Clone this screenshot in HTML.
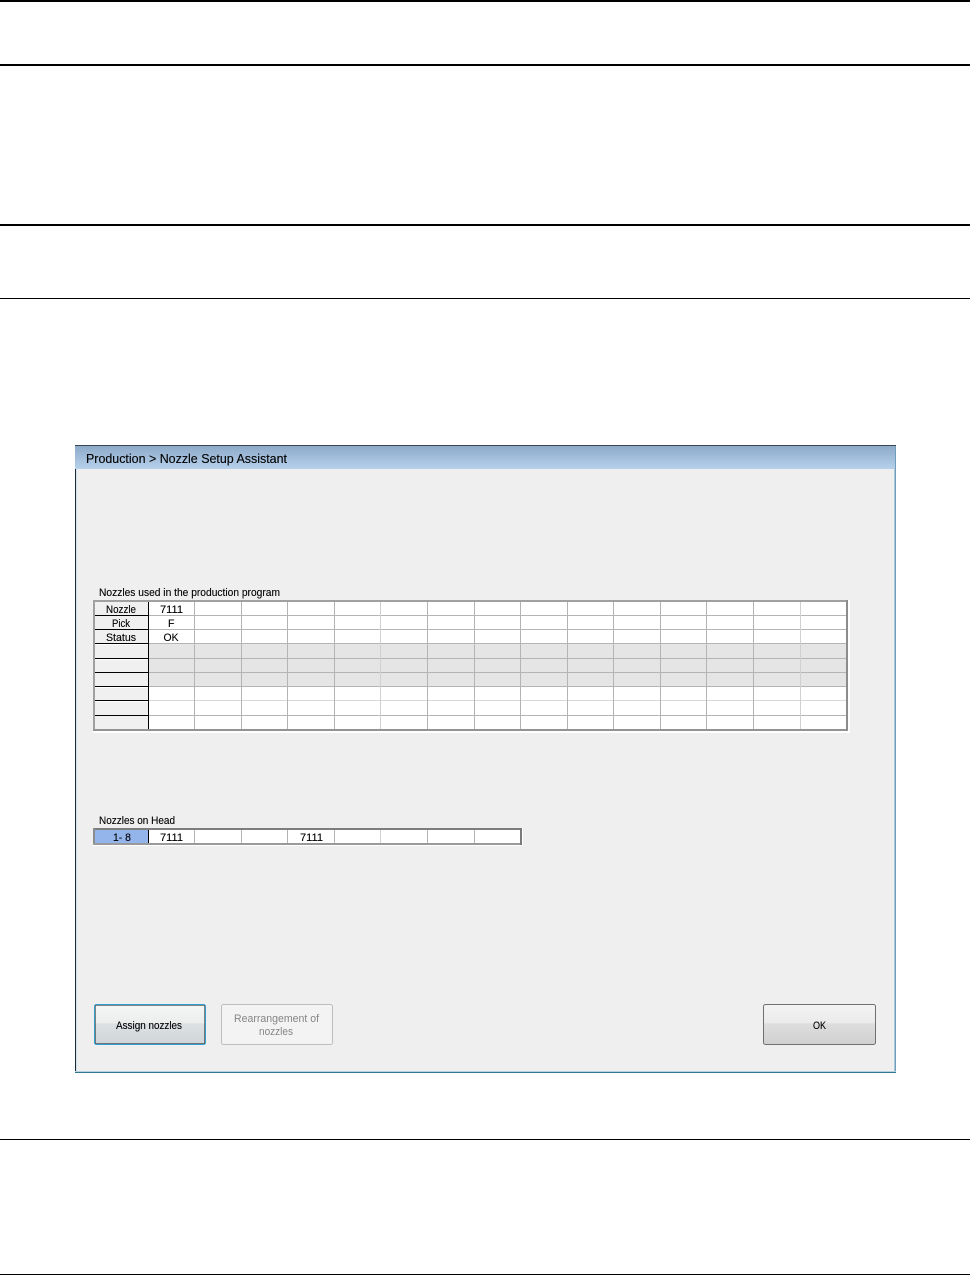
<!DOCTYPE html>
<html><head><meta charset="utf-8"><style>
html,body{margin:0;padding:0;background:#fff;width:970px;height:1275px;overflow:hidden}
svg{display:block}
text{font-family:"Liberation Sans",sans-serif;font-size:10.6px;fill:#000;stroke:#000;stroke-width:.12px}
text.d{fill:#858585;stroke:none}
</style></head><body>
<svg width="970" height="1275" viewBox="0 0 970 1275" xmlns="http://www.w3.org/2000/svg">
<defs>
<linearGradient id="tb" x1="0" y1="0" x2="0" y2="1"><stop offset="0" stop-color="#8daac9"/><stop offset="1" stop-color="#b7d1ec"/></linearGradient>
<linearGradient id="b1" x1="0" y1="0" x2="0" y2="1"><stop offset="0" stop-color="#f5f6f6"/><stop offset=".46" stop-color="#eceeee"/><stop offset=".48" stop-color="#dde1e3"/><stop offset="1" stop-color="#cfd5d8"/></linearGradient>
<linearGradient id="b2" x1="0" y1="0" x2="0" y2="1"><stop offset="0" stop-color="#f3f3f3"/><stop offset=".46" stop-color="#ebebeb"/><stop offset=".48" stop-color="#dedede"/><stop offset="1" stop-color="#d0d0d0"/></linearGradient>
</defs>
<g shape-rendering="crispEdges">
<rect x="0" y="0" width="970" height="2" fill="#000"/>
<rect x="0" y="64" width="970" height="2" fill="#000"/>
<rect x="0" y="224" width="970" height="2" fill="#000"/>
<rect x="0" y="298" width="970" height="1" fill="#000"/>
<rect x="0" y="1139" width="970" height="1" fill="#000"/>
<rect x="0" y="1274" width="970" height="1" fill="#000"/>

<!-- window -->
<rect x="75" y="445" width="821" height="628" fill="#efefef"/>
<rect x="75" y="445" width="821" height="1" fill="#3b4650"/>
<rect x="75" y="446" width="821" height="23" fill="url(#tb)"/>
<rect x="75" y="469" width="1" height="604" fill="#1c2c36"/>
<rect x="76" y="469" width="1" height="603" fill="#cfe0ea"/>
<rect x="894" y="469" width="1" height="603" fill="#a9c6da"/>
<rect x="895" y="446" width="1" height="627" fill="#6f9ebd"/>
<rect x="75" y="1071" width="821" height="1" fill="#b5d0df"/>
<rect x="75" y="1072" width="821" height="1" fill="#2f7690"/>

<!-- table 1 -->
<rect x="93" y="600" width="757" height="133" fill="#fff"/>
<rect x="95" y="602" width="53" height="128" fill="#f0f0f0"/>
<rect x="149" y="602" width="697" height="41" fill="#fff"/>
<rect x="149" y="644" width="697" height="42" fill="#e5e5e5"/>
<rect x="149" y="687" width="697" height="42" fill="#fff"/>
<g fill="#b4b4b4">
<rect x="149" y="615" width="698" height="1"/><rect x="149" y="629" width="698" height="1"/>
<rect x="149" y="643" width="698" height="1"/><rect x="149" y="658" width="698" height="1"/>
<rect x="149" y="672" width="698" height="1"/><rect x="149" y="686" width="698" height="1"/>
<rect x="149" y="700" width="698" height="1" fill="#d8d8d8"/><rect x="149" y="715" width="698" height="1"/>
<rect x="194" y="601" width="1" height="129"/><rect x="241" y="601" width="1" height="129"/>
<rect x="287" y="601" width="1" height="129"/><rect x="334" y="601" width="1" height="129"/>
<rect x="380" y="601" width="1" height="129" fill="#d0d0d0"/><rect x="427" y="601" width="1" height="129"/>
<rect x="474" y="601" width="1" height="129"/><rect x="520" y="601" width="1" height="129"/>
<rect x="567" y="601" width="1" height="129"/><rect x="613" y="601" width="1" height="129"/>
<rect x="660" y="601" width="1" height="129"/><rect x="706" y="601" width="1" height="129"/>
<rect x="753" y="601" width="1" height="129"/><rect x="800" y="601" width="1" height="129" fill="#d0d0d0"/>
</g>
<g fill="#000">
<rect x="95" y="615" width="54" height="1"/><rect x="95" y="629" width="54" height="1"/>
<rect x="95" y="643" width="54" height="1"/><rect x="95" y="658" width="54" height="1"/>
<rect x="95" y="672" width="54" height="1"/><rect x="95" y="686" width="54" height="1"/>
<rect x="95" y="700" width="54" height="1"/><rect x="95" y="715" width="54" height="1"/>
<rect x="148" y="601" width="1" height="129"/>
</g>
<g fill="#fff">
<rect x="95" y="644" width="53" height="1"/><rect x="95" y="659" width="53" height="1"/>
<rect x="95" y="687" width="53" height="1"/><rect x="95" y="701" width="53" height="1"/>
</g>
<rect x="93" y="600" width="755" height="2" fill="#a0a0a0"/>
<rect x="93" y="600" width="2" height="131" fill="#a0a0a0"/>
<rect x="93" y="729" width="755" height="2" fill="#939393"/>
<rect x="846" y="600" width="2" height="131" fill="#8c8c8c"/>

<!-- table 2 -->
<rect x="93" y="828" width="430" height="18" fill="#fff"/>
<rect x="95" y="830" width="53" height="13" fill="#94b4ec"/>
<g fill="#b4b4b4">
<rect x="194" y="830" width="1" height="14"/><rect x="241" y="830" width="1" height="14"/>
<rect x="287" y="830" width="1" height="14"/><rect x="334" y="830" width="1" height="14"/>
<rect x="380" y="830" width="1" height="14" fill="#d0d0d0"/><rect x="427" y="830" width="1" height="14"/>
<rect x="474" y="830" width="1" height="14"/>
</g>
<rect x="148" y="830" width="1" height="14" fill="#000"/>
<rect x="93" y="828" width="429" height="2" fill="#7d7d7d"/>
<rect x="93" y="828" width="2" height="17" fill="#8c8c8c"/>
<rect x="93" y="843" width="429" height="2" fill="#9a9a9a"/>
<rect x="520" y="828" width="2" height="17" fill="#7a7a7a"/>
</g>

<!-- buttons -->
<rect x="94.5" y="1004.5" width="111" height="40" rx="2" fill="url(#b1)" stroke="#2f9fd0"/>
<rect x="95.5" y="1005.5" width="109" height="38" fill="none" stroke="#111" stroke-dasharray="1 1" shape-rendering="crispEdges"/>
<rect x="221.5" y="1004.5" width="111" height="40" rx="2" fill="#f3f3f3" stroke="#bdbdbd"/>
<rect x="763.5" y="1004.5" width="112" height="40" rx="2" fill="url(#b2)" stroke="#707070"/>

<!-- text -->
<text x="86" y="463" style="font-size:12.6px" textLength="201" lengthAdjust="spacingAndGlyphs">Production &gt; Nozzle Setup Assistant</text>
<text x="99" y="596" textLength="181" lengthAdjust="spacingAndGlyphs">Nozzles used in the production program</text>
<text x="106" y="613" textLength="30" lengthAdjust="spacingAndGlyphs">Nozzle</text>
<text x="160" y="613" textLength="23" lengthAdjust="spacingAndGlyphs">7111</text>
<text x="112" y="627" textLength="18" lengthAdjust="spacingAndGlyphs">Pick</text>
<text x="168" y="627">F</text>
<text x="106" y="641" textLength="30" lengthAdjust="spacingAndGlyphs">Status</text>
<text x="163.5" y="641" textLength="15" lengthAdjust="spacingAndGlyphs">OK</text>
<text x="99" y="824" textLength="76" lengthAdjust="spacingAndGlyphs">Nozzles on Head</text>
<text x="113" y="841" textLength="18" lengthAdjust="spacingAndGlyphs">1- 8</text>
<text x="160" y="841" textLength="23" lengthAdjust="spacingAndGlyphs">7111</text>
<text x="300" y="841" textLength="23" lengthAdjust="spacingAndGlyphs">7111</text>
<text x="116" y="1029" textLength="66" lengthAdjust="spacingAndGlyphs">Assign nozzles</text>
<text class="d" x="234" y="1022" textLength="85" lengthAdjust="spacingAndGlyphs">Rearrangement of</text>
<text class="d" x="259" y="1035" textLength="34" lengthAdjust="spacingAndGlyphs">nozzles</text>
<text x="813" y="1029" textLength="13" lengthAdjust="spacingAndGlyphs">OK</text>
</svg>
</body></html>
